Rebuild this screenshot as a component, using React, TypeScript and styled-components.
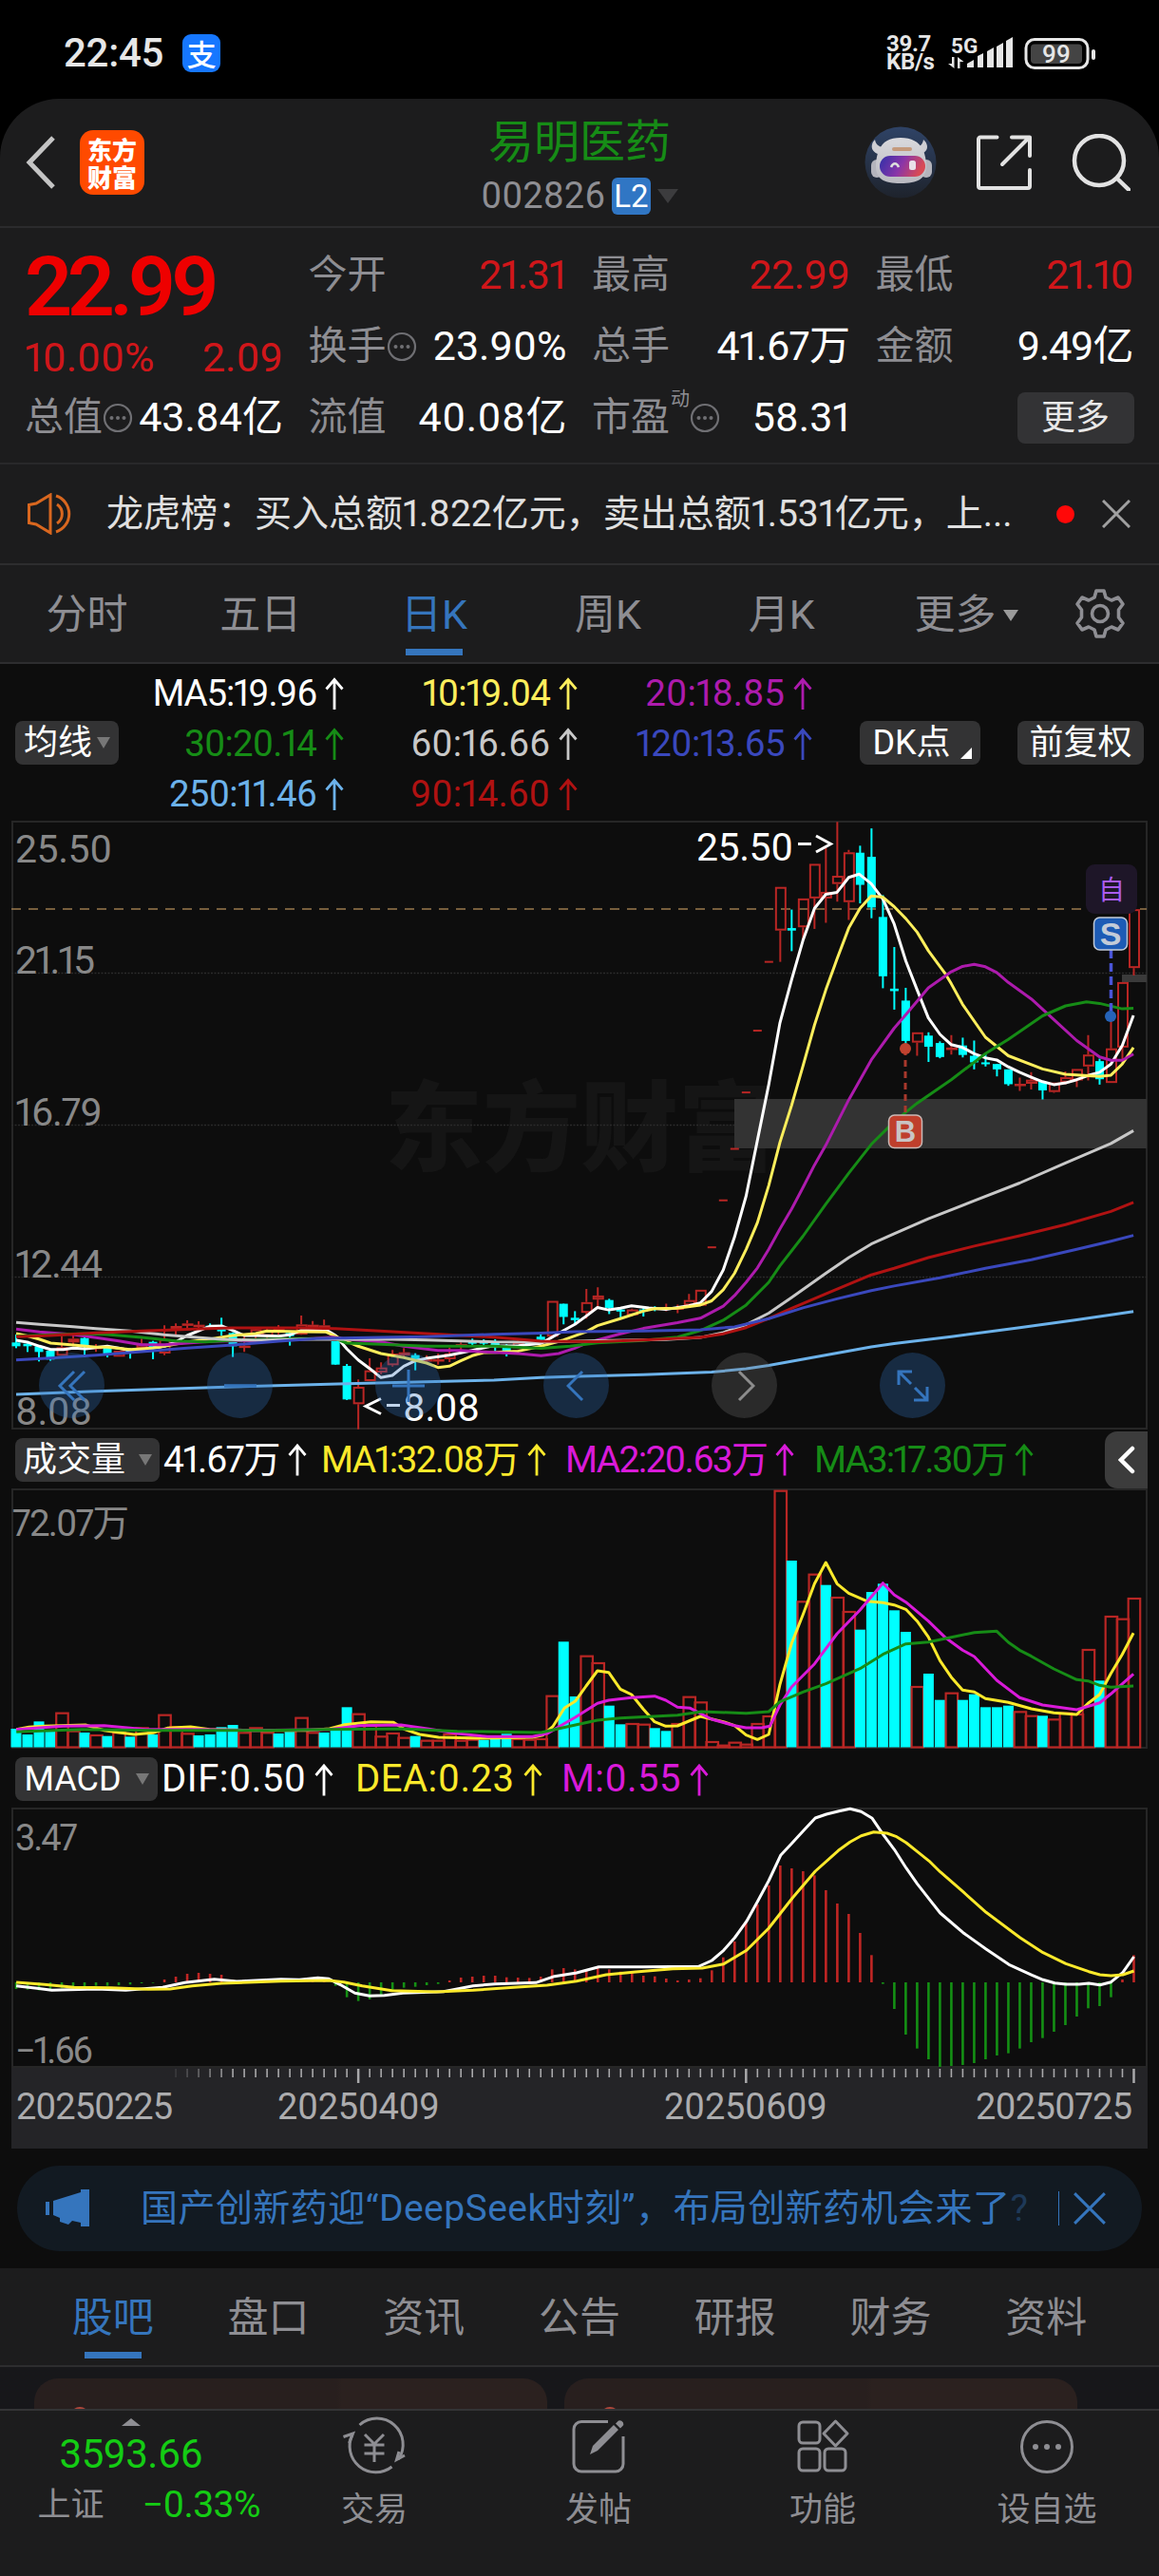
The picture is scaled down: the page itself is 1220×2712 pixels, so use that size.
import React from "react";
import styled, { createGlobalStyle, css } from "styled-components";

const BLUE = "#3575bd";
const GREY = "#8e8e93";
const RED = "#d0161a";
const UP = "#b92624";
const DOWN = "#00ffff";
const FONT = `Roboto, "Noto Sans CJK SC", sans-serif`;

const GlobalStyle = createGlobalStyle`
  html, body { margin: 0; padding: 0; background: #000; }
  body { font-family: ${FONT}; font-variant-numeric: proportional-nums; -webkit-font-smoothing: antialiased; }
  * { box-sizing: border-box; }
`;

const Screen = styled.div`
  width: 1220px;
  height: 2712px;
  overflow: hidden;
  display: flex;
  flex-direction: column;
  background: #000;
  white-space: nowrap;
`;

/* ---------- text ---------- */
const T = styled.span<{ $s: number; $c?: string; $w?: number; $ls?: number }>`
  font-size: ${(p) => p.$s}px;
  line-height: 1.2;
  color: ${(p) => p.$c ?? "#fff"};
  font-weight: ${(p) => p.$w ?? 400};
  letter-spacing: ${(p) => p.$ls ?? 0}px;
  margin-right: ${(p) => -(p.$ls ?? 0)}px;
`;

/* ---------- status bar ---------- */
const StatusBar = styled.div`
  height: 104px;
  flex: none;
  display: flex;
  align-items: center;
  padding: 8px 64px 0 67px;
  color: #e6e6e6;
`;
const PayBadge = styled.div`
  width: 40px;
  height: 40px;
  margin-left: 20px;
  border-radius: 9px;
  background: #1677ff;
  display: flex;
  align-items: center;
  justify-content: center;
  font: 500 31px/40px "Noto Sans CJK SC", sans-serif;
  color: #fff;
`;
const Speed = styled.div`
  margin-left: auto;
  display: flex;
  flex-direction: column;
  width: 55px;
  font: 700 24px/19px ${FONT};
  letter-spacing: -0.3px;
`;
const Signal = styled.svg`
  width: 72px;
  height: 40px;
  margin-left: 9px;
  overflow: visible;
`;
const BatteryIcon = styled.svg`
  width: 78px;
  height: 36px;
  margin-left: 9px;
`;

/* ---------- header ---------- */
const Panel = styled.div`
  flex: none;
  background: #1c1c1d;
`;
const Header = styled(Panel)`
  height: 136px;
  border-radius: 62px 62px 0 0;
  border-bottom: 2px solid #2b2b2d;
  display: grid;
  grid-template-columns: 420px 1fr 420px;
`;
const HeaderSide = styled.div<{ $end?: boolean }>`
  display: flex;
  align-items: center;
  ${(p) =>
    p.$end
      ? css`
          justify-content: flex-end;
          padding-right: 30px;
          gap: 42px;
        `
      : css`
          padding-left: 26px;
          gap: 24px;
        `}
`;
const AppLogo = styled.div`
  width: 68px;
  height: 68px;
  border-radius: 14px;
  background: #ff4a00;
  color: #fff;
  text-align: center;
  padding-top: 5px;
  font: 900 26px/29px "Noto Sans CJK SC", sans-serif;
`;
const HeaderTitle = styled.div`
  display: flex;
  flex-direction: column;
  align-items: center;
  padding-top: 17px;
`;
const CodeRow = styled.div`
  display: flex;
  align-items: center;
  height: 40px;
  margin-top: 8px;
  gap: 7px;
`;
const LevelTag = styled.span`
  width: 41px;
  height: 39px;
  border-radius: 6px;
  background: #3076c4;
  color: #fff;
  text-align: center;
  font: 400 33px/40px ${FONT};
`;
const Tri = styled.i<{ $w: number; $h: number; $c: string; $up?: boolean; $hang?: boolean }>`
  width: 0;
  height: 0;
  flex: none;
  margin-right: ${(p) => (p.$hang ? -p.$w - 7 : 0)}px;
  border-left: ${(p) => p.$w / 2}px solid transparent;
  border-right: ${(p) => p.$w / 2}px solid transparent;
  ${(p) => (p.$up ? "border-bottom" : "border-top")}: ${(p) => p.$h}px solid ${(p) => p.$c};
`;

/* ---------- quote ---------- */
const Quote = styled(Panel)`
  height: 249px;
  border-bottom: 2px solid #28282a;
  padding: 12px 24px 12px 26px;
  display: grid;
  grid-template-columns: 272px 272px 272px 272px;
  column-gap: 26.5px;
`;
const QuoteCol = styled.div`
  display: grid;
  grid-template-rows: 75px 75px 75px;
`;
const PriceCol = styled.div`
  display: grid;
  grid-template-rows: 99px 52px 74px;
`;
const Pair = styled.div`
  display: flex;
  align-items: center;
  justify-content: space-between;
`;
const Label = styled.div`
  display: flex;
  align-items: center;
  color: ${GREY};
  font-size: 41px;
  line-height: 1.2;
`;
const Sup = styled.sup`
  font-size: 20px;
  line-height: 1;
  align-self: flex-start;
  margin: -5px 0 0 1px;
`;
const MoreButton = styled.button`
  width: 123px;
  height: 54px;
  margin-left: auto;
  align-self: center;
  border: 0;
  border-radius: 8px;
  background: #333335;
  color: #e8e8e8;
  font: 400 36px/52px ${FONT};
  padding: 0;
`;

/* ---------- notice ---------- */
const Notice = styled(Panel)`
  height: 106px;
  border-bottom: 2px solid #2d2d2f;
  display: flex;
  align-items: center;
  padding: 0 30px 0 28px;
`;
const NoticeText = styled.div`
  margin-left: 30px;
  font-size: 39px;
  line-height: 1.2;
  color: #e0e0e0;
`;
const RedDot = styled.i`
  width: 19px;
  height: 19px;
  border-radius: 50%;
  background: #ff0808;
  margin: 0 29px 0 auto;
`;

/* ---------- tab bars ---------- */
const Tabs = styled(Panel)<{ $pad?: number }>`
  height: 104px;
  border-bottom: 2px solid #2d2d2f;
  display: flex;
  padding: 0 ${(p) => p.$pad ?? 0}px;
`;
const Tab = styled.div<{ $on?: boolean }>`
  flex: 1;
  display: flex;
  align-items: center;
  justify-content: center;
  gap: 7px;
  padding-top: 3px;
  font-size: 43px;
  line-height: 1.2;
  color: ${(p) => (p.$on ? BLUE : GREY)};
  ${(p) =>
    p.$on &&
    css`
      background: linear-gradient(${BLUE}, ${BLUE}) center bottom 7px / 60px 7px no-repeat;
    `}
`;
const GearCell = styled.div`
  width: 123px;
  display: flex;
  align-items: center;
  justify-content: center;
`;

/* ---------- chart area ---------- */
const Charts = styled.div`
  flex: none;
  background: #0d0d0d;
  padding: 0 12px;
  height: 1689px;
`;
const AverageBar = styled.div`
  height: 165px;
  display: flex;
  align-items: center;
  padding: 0 4px;
`;
const AverageGrid = styled.div`
  width: 730px;
  display: grid;
  grid-template-columns: 237px 246px 247px;
  grid-auto-rows: 53.3px;
  margin-top: 3px;
`;
const Reading = styled.div<{ $c: string; $s?: number; $ls?: number }>`
  display: flex;
  align-items: center;
  justify-content: flex-end;
  gap: 9px;
  color: ${(p) => p.$c};
  font-size: ${(p) => p.$s ?? 38.5}px;
  letter-spacing: ${(p) => p.$ls ?? 0}px;
  line-height: 1.2;
`;
const Chip = styled.button<{ $w: number; $gap?: number }>`
  width: ${(p) => p.$w}px;
  height: 46px;
  flex: none;
  border: 0;
  padding: 0;
  border-radius: 8px;
  background: #333334;
  color: #fff;
  font: 400 36px/44px ${FONT};
  display: flex;
  align-items: center;
  justify-content: center;
  gap: ${(p) => p.$gap ?? 4}px;
`;
const ChipGap = styled.div<{ $w: number }>`
  width: ${(p) => p.$w}px;
`;
const Corner = styled.i`
  width: 0;
  height: 0;
  align-self: flex-end;
  margin: 0 -4px 6px 6px;
  border-left: 12px solid transparent;
  border-bottom: 12px solid #fff;
`;
const IndicatorBar = styled.div<{ $h: number }>`
  height: ${(p) => p.$h}px;
  display: flex;
  align-items: center;
  padding: 2px 0 0 4px;
`;
const Slot = styled.div<{ $w: number }>`
  width: ${(p) => p.$w}px;
  display: flex;
  padding-left: 4px;
`;
const Collapse = styled.div`
  width: 45px;
  height: 60px;
  margin-left: auto;
  border-radius: 13px 0 0 13px;
  background: #3c3c3c;
  display: flex;
  align-items: center;
  justify-content: center;
`;
const ChartBox = styled.div`
  position: relative;
`;
const Plot = styled.svg`
  display: block;
  width: 1196px;
  overflow: visible;
`;
const Controls = styled.div`
  position: absolute;
  left: 29px;
  top: 560px;
  display: flex;
  gap: 108px;
`;
const Round = styled.div<{ $grey?: boolean }>`
  width: 69px;
  height: 69px;
  border-radius: 50%;
  background: ${(p) => (p.$grey ? "rgba(120,120,120,0.28)" : "rgba(48,114,190,0.3)")};
  display: flex;
  align-items: center;
  justify-content: center;
`;
const BannerWrap = styled.div`
  padding: 18px 6px 0;
`;
const Banner = styled.div`
  height: 90px;
  border-radius: 45px;
  background: #121a22;
  display: flex;
  align-items: center;
  padding: 0 36px 0 29px;
  color: ${BLUE};
`;
const BannerText = styled.div`
  width: 966px;
  margin-left: 53px;
  font-size: 39px;
  letter-spacing: 0.45px;
  line-height: 1.2;
`;
const Faded = styled.span`
  opacity: 0.35;
`;
const BannerRule = styled.i`
  width: 1px;
  height: 36px;
  background: ${BLUE};
  margin-right: 15px;
`;

/* ---------- lower part ---------- */
const Cards = styled.div`
  flex: none;
  height: 44px;
  background: #17171a;
  padding: 12px 0 0 36px;
  display: flex;
  gap: 18px;
  overflow: hidden;
`;
const Card = styled.div`
  width: 540px;
  height: 90px;
  border-radius: 25px;
  background: linear-gradient(90deg, #281f1e 59%, #2b211f 60%);
  padding: 30px 0 0 38px;
`;
const CardDot = styled.i`
  display: block;
  width: 20px;
  height: 20px;
  border-radius: 50%;
  background: #b0483c;
`;
const BottomBar = styled.div`
  flex: 1;
  border-top: 2px solid #343436;
  background: #1c1c1d;
  display: grid;
  grid-template-columns: 276px repeat(4, 236px);
`;
const IndexCell = styled.div`
  display: flex;
  flex-direction: column;
  align-items: center;
  padding-top: 8px;
  gap: 5px;
`;
const IndexRow = styled.div`
  width: 235px;
  margin-left: 38px;
  display: flex;
  align-items: center;
  justify-content: space-between;
`;
const NavItem = styled.div`
  display: flex;
  flex-direction: column;
  align-items: center;
  padding-top: 5px;
  gap: 13px;
  font-size: 35px;
  line-height: 1.2;
  color: ${GREY};
`;

/* ---------- small glyphs ---------- */
const Arrow = ({ h = 34 }: { h?: number }) => (
  <svg width="20" height={h} viewBox="0 0 20 34" fill="none" stroke="currentColor" strokeWidth="2.8">
    <path d="M10 34V3M1.5 12.5 10 2.500l8.500 10" />
  </svg>
);
const Dots = () => (
  <svg width="32" height="32" viewBox="0 0 32 32" fill="none" stroke="#6f6f73" strokeWidth="2.2">
    <circle cx="16" cy="16" r="14" />
    <g fill="#6f6f73" stroke="none">
      <circle cx="9.500" cy="16" r="2" />
      <circle cx="16" cy="16" r="2" />
      <circle cx="22.500" cy="16" r="2" />
    </g>
  </svg>
);
const Cross = ({ s, c, w = 3 }: { s: number; c: string; w?: number }) => (
  <svg width={s} height={s} viewBox="0 0 30 30" stroke={c} strokeWidth={w}>
    <path d="M1 1l28 28M29 1 1 29" />
  </svg>
);
const Robot = () => (
  <svg width="76" height="76" viewBox="0 0 76 76">
    <defs>
      <linearGradient id="sky" x1="0" y1="0" x2="0" y2="1">
        <stop offset="0" stopColor="#2f4366" />
        <stop offset="1" stopColor="#1e232c" />
      </linearGradient>
      <linearGradient id="visor" x1="0" y1="0" x2="1" y2="0.25">
        <stop offset="0" stopColor="#2f2fa8" />
        <stop offset="0.55" stopColor="#8a35a8" />
        <stop offset="1" stopColor="#d84a55" />
      </linearGradient>
      <linearGradient id="shell" x1="0" y1="0" x2="0" y2="1">
        <stop offset="0" stopColor="#d9d9dd" />
        <stop offset="1" stopColor="#b9b9c0" />
      </linearGradient>
    </defs>
    <circle cx="38" cy="38" r="37.500" fill="url(#sky)" />
    <path d="M11 14c-6 6-4 15 8 16l7-8c-8 1-14-1-15-8zM62 14c7 6 5 15-7 16l-7-8c8 1 13-1 14-8z" fill="#cfcfd4" />
    <rect x="7" y="35" width="12" height="19" rx="6" fill="#b4b4bc" />
    <rect x="59" y="35" width="12" height="19" rx="6" fill="#b4b4bc" />
    <path d="M24 15c6-4 22-4 28 0 9 4 13 15 13 27 0 13-9 18-27 18s-26-5-26-18c0-12 4-23 12-27z" fill="url(#shell)" />
    <rect x="16" y="31" width="48" height="22" rx="11" fill="url(#visor)" />
    <rect x="29" y="22" width="21" height="4" rx="2" fill="#c59a7c" />
    <path d="M28 43c2-5 6-5 8 0" stroke="#ddd" strokeWidth="2.500" fill="none" />
    <rect x="47" y="36" width="7" height="10" rx="2.500" fill="#e9dfe8" />
  </svg>
);

/* ---------- chart data ---------- */
type Pt = [number, number];
const xAt = (i: number) => 17 + 12.005 * i;
const ya = (y: number) => 1330 + y / 3;
const yb = (y: number) => 860 + y / 2.306;
const xb = (x: number) => 600 + x / 2.529;
const yv = (y: number) => 1380 + y / 3;
const ym = (y: number) => 1840 + y / 3;

// direction, body top, body bottom, wick top, wick bottom
type Bar = [number, number, number, number, number];
const early: Bar[] = [
  [0, 250, 262, 225, 268], [0, 254, 262, 252, 280], [0, 262, 280, 258, 310], [0, 276, 304, 272, 308],
  [1, 265, 292, 230, 292], [1, 238, 250, 228, 262], [0, 236, 258, 232, 290], [1, 264, 267, 255, 280],
  [0, 266, 290, 262, 297], [1, 276, 295, 276, 295], [0, 272, 280, 268, 301], [1, 254, 268, 238, 275],
  [0, 248, 268, 245, 303], [1, 240, 285, 196, 290], [1, 198, 208, 190, 225], [1, 190, 192, 180, 204],
  [1, 194, 197, 183, 204], [0, 197, 200, 190, 210], [0, 207, 215, 172, 228], [0, 220, 262, 218, 296],
  [1, 260, 264, 230, 280], [1, 208, 225, 205, 245], [1, 212, 230, 205, 238], [1, 206, 212, 195, 225],
  [0, 220, 230, 215, 260], [1, 193, 225, 165, 226], [1, 194, 197, 182, 206], [1, 196, 206, 178, 215],
  [0, 246, 320, 246, 320], [0, 324, 430, 318, 432], [1, 390, 445, 367, 524], [1, 338, 372, 300, 372],
  [1, 329, 345, 313, 350], [1, 285, 322, 274, 326], [1, 281, 291, 268, 298], [0, 290, 306, 284, 338],
  [1, 303, 306, 290, 315], [1, 303, 306, 285, 320], [1, 285, 303, 266, 312], [1, 255, 264, 250, 275],
  [0, 248, 252, 238, 262], [0, 248, 252, 240, 262],
];
const late: Bar[] = [
  [0, 1275, 1282, 1268, 1300], [0, 1286, 1296, 1280, 1310], [1, 1275, 1290, 1272, 1292], [0, 1272, 1280, 1270, 1284],
  [0, 1262, 1270, 1250, 1280], [1, 1175, 1262, 1175, 1262], [0, 1182, 1214, 1182, 1232], [0, 1216, 1222, 1200, 1232],
  [1, 1178, 1204, 1146, 1218], [1, 1162, 1172, 1142, 1190], [0, 1173, 1192, 1170, 1207], [0, 1196, 1201, 1190, 1215],
  [1, 1196, 1210, 1194, 1212], [0, 1196, 1200, 1190, 1213], [0, 1192, 1196, 1188, 1200], [1, 1191, 1194, 1182, 1200],
  [1, 1191, 1195, 1184, 1205], [1, 1173, 1186, 1158, 1190], [1, 1148, 1187, 1148, 1187], [2, 1045, 0, 0, 0],
  [2, 931, 0, 0, 0], [2, 806, 0, 0, 0], [2, 669, 0, 0, 0], [2, 519, 0, 0, 0], [2, 352, 0, 0, 0],
  [1, 170, 276, 170, 352], [0, 270, 276, 225, 326], [1, 198, 268, 198, 300], [1, 114, 198, 114, 272],
  [1, 182, 198, 75, 257], [1, 143, 163, 12, 206], [1, 86, 207, 80, 250], [0, 87, 165, 70, 210],
  [0, 97, 220, 28, 246], [0, 243, 387, 190, 416], [0, 417, 423, 316, 468], [0, 446, 544, 415, 560],
  [1, 523, 548, 523, 580], [0, 531, 558, 523, 595], [0, 549, 583, 545, 586], [1, 560, 566, 530, 577],
  [0, 555, 578, 536, 584], [0, 580, 596, 543, 613], [0, 596, 600, 575, 606], [0, 600, 613, 600, 630],
  [0, 613, 649, 613, 653], [1, 648, 651, 633, 665], [1, 638, 648, 620, 662], [0, 643, 664, 643, 686],
  [1, 645, 668, 645, 670], [1, 632, 645, 618, 650], [1, 612, 640, 612, 656], [1, 577, 606, 530, 640],
  [0, 593, 637, 587, 650], [1, 562, 646, 485, 646], [1, 401, 560, 401, 590], [1, 224, 367, 224, 385],
];
const candles: Bar[] = [
  ...early.map(([d, a, b, c, e]): Bar => [d, ya(a), ya(b), ya(c), ya(e)]),
  ...late.map(([d, a, b, c, e]): Bar => [d, yb(a), yb(b), yb(c), yb(e)]),
];

const averages: { c: string; a: Pt[]; b: Pt[] }[] = [
  {
    c: "#6cb2ea",
    a: [[51, 414], [300, 404], [735, 390], [1095, 380], [1560, 369]],
    b: [[-77, 1361], [0, 1359], [195, 1354], [377, 1348], [469, 1340], [529, 1332], [620, 1317], [711, 1302], [802, 1287], [863, 1279], [1015, 1262], [1197, 1240], [1349, 1221], [1440, 1209], [1500, 1201]],
  },
  {
    c: "#ffffff",
    a: [[51, 243], [90, 250], [125, 262], [160, 272], [200, 272], [231, 268], [270, 270], [339, 262], [375, 268], [411, 275], [447, 273], [483, 268], [519, 262], [555, 248], [591, 228], [640, 208], [663, 199], [700, 198], [735, 212], [771, 228], [807, 228], [880, 230], [915, 226], [951, 212], [1030, 210], [1060, 228], [1095, 270], [1131, 305], [1167, 332], [1203, 361], [1239, 354], [1275, 325], [1311, 308], [1347, 300], [1419, 290], [1491, 275], [1550, 262]],
    b: [[-137, 1284], [-77, 1278], [-57, 1268], [-17, 1247], [13, 1232], [43, 1212], [73, 1191], [103, 1197], [134, 1193], [164, 1187], [210, 1192], [255, 1196], [316, 1187], [347, 1180], [377, 1152], [408, 1100], [438, 1020], [469, 920], [499, 785], [529, 650], [559, 500], [590, 395], [620, 300], [651, 222], [681, 188], [711, 183], [742, 147], [770, 139], [802, 162], [833, 200], [863, 260], [894, 350], [924, 420], [954, 488], [985, 528], [1015, 553], [1045, 560], [1076, 575], [1106, 585], [1136, 590], [1167, 607], [1197, 620], [1228, 632], [1258, 643], [1288, 650], [1319, 646], [1349, 638], [1379, 628], [1410, 620], [1440, 600], [1470, 555], [1500, 482]],
  },
  {
    c: "#fdee5c",
    a: [[51, 222], [90, 230], [125, 240], [160, 252], [231, 258], [303, 265], [339, 265], [411, 272], [483, 268], [519, 262], [591, 248], [660, 240], [735, 228], [807, 222], [843, 214], [951, 216], [1030, 217], [1070, 235], [1131, 262], [1203, 285], [1275, 298], [1347, 315], [1383, 329], [1419, 325], [1455, 308], [1491, 292], [1527, 282]],
    b: [[-200, 1300], [-137, 1297], [-77, 1285], [-17, 1270], [43, 1250], [73, 1235], [134, 1218], [195, 1200], [225, 1194], [286, 1193], [347, 1185], [377, 1175], [408, 1148], [438, 1108], [469, 1050], [499, 985], [529, 895], [559, 790], [590, 700], [620, 605], [651, 505], [681, 420], [711, 345], [742, 270], [772, 222], [802, 192], [833, 195], [863, 218], [894, 247], [924, 280], [954, 325], [1000, 382], [1015, 405], [1045, 455], [1106, 535], [1167, 580], [1258, 612], [1319, 625], [1410, 630], [1440, 627], [1470, 600], [1500, 560]],
  },
  {
    c: "#ad1bad",
    a: [[51, 208], [125, 217], [231, 225], [303, 235], [375, 245], [447, 257], [519, 257], [591, 252], [663, 247], [735, 245], [843, 243], [951, 240], [1050, 233], [1095, 240], [1203, 248], [1275, 262], [1383, 275], [1455, 275], [1527, 280]],
    b: [[-137, 1303], [-77, 1308], [-30, 1303], [13, 1290], [43, 1278], [73, 1270], [134, 1255], [195, 1242], [286, 1228], [347, 1217], [408, 1188], [438, 1162], [469, 1130], [499, 1095], [529, 1050], [559, 1000], [590, 952], [620, 900], [651, 845], [681, 797], [742, 687], [802, 590], [863, 513], [894, 480], [954, 415], [1015, 376], [1045, 363], [1076, 358], [1106, 364], [1136, 378], [1167, 402], [1228, 442], [1288, 492], [1349, 543], [1410, 583], [1440, 591], [1470, 591], [1500, 576]],
  },
  {
    c: "#168c16",
    a: [[51, 230], [160, 226], [267, 222], [339, 225], [447, 234], [555, 245], [650, 248], [735, 243], [843, 240], [951, 238], [1060, 238], [1095, 252], [1203, 256], [1347, 262], [1560, 262]],
    b: [[-77, 1290], [0, 1285], [73, 1277], [195, 1271], [286, 1263], [347, 1247], [408, 1222], [469, 1185], [529, 1130], [559, 1090], [620, 1018], [681, 940], [742, 865], [802, 795], [863, 740], [924, 695], [1015, 638], [1106, 575], [1167, 540], [1258, 483], [1319, 459], [1375, 449], [1410, 453], [1470, 466], [1500, 465]],
  },
  {
    c: "#c8c8c8",
    a: [[51, 187], [125, 193], [231, 200], [303, 206], [411, 214], [519, 226], [591, 232], [700, 240], [807, 243], [951, 240], [1095, 240], [1239, 240], [1347, 242], [1560, 248]],
    b: [[-77, 1275], [73, 1272], [255, 1269], [347, 1264], [408, 1252], [469, 1233], [529, 1205], [590, 1167], [681, 1108], [742, 1070], [802, 1037], [863, 1012], [954, 976], [1076, 932], [1197, 889], [1319, 840], [1440, 793], [1500, 762]],
  },
  {
    c: "#b01212",
    a: [[51, 232], [160, 228], [303, 220], [447, 214], [555, 210], [627, 207], [735, 204], [951, 204], [1060, 206], [1200, 214], [1347, 222], [1560, 233]],
    b: [[-77, 1273], [73, 1274], [195, 1270], [347, 1264], [408, 1255], [469, 1240], [529, 1218], [590, 1193], [681, 1158], [802, 1112], [863, 1096], [954, 1070], [1076, 1042], [1197, 1017], [1319, 990], [1440, 958], [1500, 936]],
  },
  {
    c: "#3a48bd",
    a: [[51, 305], [160, 299], [303, 290], [447, 279], [591, 268], [735, 258], [880, 246], [1000, 238], [1203, 234], [1347, 232], [1560, 224]],
    b: [[-77, 1253], [13, 1250], [195, 1248], [347, 1245], [438, 1238], [529, 1218], [620, 1192], [711, 1170], [802, 1150], [863, 1139], [985, 1119], [1106, 1096], [1228, 1075], [1349, 1050], [1440, 1030], [1500, 1016]],
  },
];

// a leading "c" marks a falling session
const volumes = `c1320 c1338 c1297 c1328 r1268 r1325 c1332 r1338 c1343 r1330 c1345 r1315 c1338 r1274 r1312 r1333 c1341 c1338 c1315 c1308 r1330 r1315 r1330 c1335 c1330 r1283 r1330 c1332 c1322 c1252 r1271 r1305 r1342 r1332 r1346 c1343 r1355 r1355 r1335 r1355 r1352 c1355 c1343 c1336 r1350 r1352 r1350 r1214 c1045 c1218 r1088 r1110 c1247 c1306 r1302 r1304 c1318 c1327 r1302 r1217 r1234 r1359 r1370 r1361 r1367 r1302 r1278 r566 c789 r916 r830 c866 r903 r948 c1007 c888 c862 c946 c1014 r1185 c1146 c1229 r1205 c1229 c1211 c1252 c1252 c1247 r1264 r1277 c1279 r1288 r1268 r1272 r1068 c1168 r963 r971 r906`
  .split(" ")
  .map((s) => ({ fall: s[0] === "c", y: yv(Number(s.slice(1))) }));

const volumeLines: { c: string; p: Pt[] }[] = [
  {
    c: "#fbe92b",
    p: [[-1474, 1322], [-1440, 1315], [-1400, 1312], [-1290, 1308], [-1240, 1325], [-1200, 1332], [-1160, 1338], [-1110, 1333], [-1070, 1318], [-1010, 1314], [-960, 1322], [-840, 1325], [-700, 1325], [-640, 1320], [-600, 1307], [-530, 1298], [-470, 1300], [-440, 1322], [-400, 1338], [-350, 1347], [-240, 1350], [-100, 1347], [-72, 1340], [-45, 1312], [-15, 1255], [15, 1232], [43, 1185], [73, 1137], [103, 1142], [134, 1195], [164, 1212], [195, 1258], [225, 1298], [255, 1312], [286, 1311], [316, 1296], [347, 1281], [408, 1298], [438, 1310], [469, 1340], [499, 1354], [529, 1338], [544, 1260], [559, 1180], [590, 1050], [620, 960], [651, 862], [681, 795], [711, 862], [742, 892], [790, 917], [833, 922], [863, 929], [894, 943], [924, 980], [954, 1030], [985, 1105], [1015, 1157], [1045, 1198], [1076, 1204], [1106, 1225], [1167, 1237], [1228, 1257], [1288, 1270], [1349, 1275], [1379, 1240], [1410, 1212], [1440, 1145], [1470, 1085], [1500, 1018]],
  },
  {
    c: "#d91ad9",
    p: [[-1474, 1322], [-1350, 1312], [-1240, 1310], [-1130, 1322], [-1000, 1322], [-840, 1325], [-640, 1322], [-560, 1310], [-450, 1308], [-380, 1320], [-300, 1335], [-220, 1345], [-100, 1345], [-60, 1335], [-17, 1305], [13, 1285], [43, 1262], [73, 1240], [103, 1230], [164, 1222], [225, 1217], [255, 1230], [286, 1252], [320, 1255], [377, 1290], [438, 1310], [469, 1317], [510, 1317], [532, 1312], [559, 1245], [590, 1188], [651, 1115], [711, 1020], [772, 945], [833, 860], [863, 897], [894, 920], [954, 980], [1000, 1033], [1045, 1072], [1076, 1092], [1136, 1167], [1197, 1222], [1258, 1245], [1349, 1260], [1410, 1238], [1440, 1210], [1500, 1147]],
  },
  {
    c: "#168c16",
    p: [[-1474, 1330], [-1300, 1322], [-1100, 1325], [-800, 1325], [-650, 1322], [-450, 1320], [-300, 1328], [-77, 1332], [0, 1312], [73, 1293], [134, 1286], [286, 1277], [350, 1266], [469, 1271], [529, 1266], [559, 1235], [620, 1204], [681, 1178], [772, 1130], [833, 1085], [894, 1052], [954, 1046], [1015, 1031], [1076, 1016], [1136, 1012], [1167, 1047], [1197, 1072], [1228, 1091], [1288, 1131], [1349, 1165], [1379, 1169], [1410, 1183], [1440, 1189], [1500, 1185]],
  },
];

const ZERO = 741;
const histogram = [
  762, 764, 766, 765, 760, 758, 756, 752, 752, 750, 748, 744, 743, 732, 723, 714, 711, 714, 717, 733, 736, 736, 732, 733, 735,
  736, 733, 733, 752, 788, 800, 795, 785, 768, 758, 755, 750, 746, 735, 726, 723, 720, 720, 725, 726, 727, 723, 700, 696, 700,
  700, 690, 700, 707, 712, 720, 722, 729, 735, 732, 728, 703, 662, 612, 552, 495, 435, 372, 381, 390, 403, 450, 492, 525, 585,
  655, 746, 825, 906, 950, 984, 1008, 1005, 1002, 996, 984, 972, 965, 950, 930, 917, 897, 876, 849, 823, 816, 788, 732, 655,
];
const dif: Pt[] = [[22, 752], [50, 760], [70, 766], [130, 762], [170, 766], [220, 757], [250, 742], [290, 731], [320, 738], [380, 731], [405, 733], [430, 727], [445, 730], [460, 748], [480, 775], [500, 784], [520, 782], [545, 775], [600, 770], [640, 752], [670, 746], [725, 742], [750, 722], [780, 711], [810, 692], [870, 692], [945, 691], [963, 672], [979, 640], [994, 600], [1010, 548], [1025, 485], [1040, 420], [1056, 340], [1072, 300], [1087, 262], [1103, 222], [1118, 210], [1135, 200], [1150, 193], [1165, 202], [1180, 223], [1195, 275], [1210, 322], [1226, 380], [1241, 430], [1257, 478], [1272, 522], [1303, 584], [1334, 636], [1365, 685], [1396, 718], [1411, 733], [1427, 743], [1442, 747], [1460, 747], [1473, 744], [1488, 749], [1503, 740], [1519, 710], [1534, 660]];
const dea: Pt[] = [[22, 741], [60, 748], [100, 757], [150, 758], [200, 763], [230, 762], [260, 752], [300, 744], [380, 737], [445, 735], [465, 740], [490, 752], [530, 767], [590, 771], [640, 766], [700, 756], [740, 750], [780, 737], [820, 717], [860, 708], [910, 698], [950, 696], [979, 683], [1010, 640], [1040, 570], [1072, 475], [1103, 390], [1134, 325], [1150, 298], [1165, 278], [1182, 266], [1200, 270], [1212, 280], [1226, 300], [1241, 328], [1257, 358], [1272, 392], [1303, 455], [1334, 520], [1380, 600], [1411, 647], [1442, 682], [1473, 707], [1488, 717], [1503, 720], [1519, 717], [1534, 705]];

const join = (pts: Pt[]) => pts.map(([x, y]) => `${x.toFixed(1)},${y.toFixed(1)}`).join(" ");
const Line = ({ pts, c, w = 3 }: { pts: Pt[]; c: string; w?: number }) => (
  <polyline points={join(pts)} fill="none" stroke={c} strokeWidth={w} strokeLinejoin="round" />
);
const Txt = ({ x, y, s = 41, c = "#888", a, len, children }: { x: number; y: number; s?: number; c?: string; a?: "middle" | "end"; len?: number; children: string }) => (
  <text x={x} y={y} fontSize={s} fill={c} textAnchor={a} textLength={len} fontFamily={FONT}>
    {children}
  </text>
);

const PriceChart = () => (
  <Plot viewBox="12 864 1196 641" height="641">
    <rect x="13" y="865" width="1194" height="639" fill="none" stroke="#262626" strokeWidth="2" />
    <text x="405" y="1225" fontSize="103" fontWeight="900" fill="#151515" fontFamily='"Noto Sans CJK SC", sans-serif'>
      东方财富
    </text>
    <path d="M12 1024.500H1207M12 1184.500H1207M12 1344.500H1207" stroke="#2b2b2b" strokeWidth="1.500" strokeDasharray="2 1.500" />
    <rect x="773" y="1157" width="434" height="52" fill="#333" />
    <rect x="1181" y="1026" width="26" height="8" fill="#3a3a3a" />
    <path d="M12 957H1207" stroke="#9b7a4d" strokeWidth="1.500" strokeDasharray="10 8" />
    <Txt x={16} y={908} len={102}>25.50</Txt>
    <Txt x={16} y={1025} len={84}>21.15</Txt>
    <Txt x={16} y={1184.500} len={92}>16.79</Txt>
    <Txt x={16} y={1345} len={92}>12.44</Txt>
    {candles.map(([d, t, b, h, l], i) => {
      const x = xAt(i);
      if (d === 2) return <rect key={i} x={x - 4.500} y={t - 1} width="9" height="2" fill={UP} />;
      if (d === 0)
        return (
          <g key={i} fill={DOWN}>
            <rect x={x - 1} y={h} width="2" height={l - h} />
            <rect x={x - 4.500} y={t} width="9" height={Math.max(2, b - t)} />
          </g>
        );
      return (
        <g key={i} stroke={UP} strokeWidth="2" fill="none">
          <path d={`M${x} ${h}V${t}M${x} ${b}V${l}`} />
          <rect x={x - 4.500} y={t + 1} width="10" height={Math.max(0.5, b - t - 2)} />
        </g>
      );
    })}
    {averages.map((m) => (
      <Line key={m.c} c={m.c} pts={[...m.a.map(([x, y]): Pt => [x / 3, ya(y)]), ...m.b.map(([x, y]): Pt => [xb(x), yb(y)])]} />
    ))}
    <Txt x={16} y={1500} len={81}>8.08</Txt>
    <Txt x={733} y={906} s={41} c="#fff" len={102}>25.50</Txt>
    <path d="M840 888.500h14M859 880l15.500 8.500-15.500 8.500" stroke="#fff" strokeWidth="3" fill="none" />
    <Txt x={424} y={1496} s={41} c="#fff" len={81}>8.08</Txt>
    <path d="M401 1472.500l-16 8 16 8M407 1479.500h14" stroke="#fff" strokeWidth="3" fill="none" />
    <path d="M953 1104v70" stroke="#a8382c" strokeWidth="3" strokeDasharray="7 5" />
    <circle cx="953" cy="1104" r="6" fill="#c0422f" />
    <rect x="935.500" y="1174" width="35" height="34.500" rx="6" fill="#bf3f2c" stroke="#c9b9b6" strokeWidth="1.500" />
    <text x="953" y="1202" fontSize="31" fontWeight="700" fill="#c9c4c4" textAnchor="middle" fontFamily='"Liberation Sans", sans-serif'>
      B
    </text>
    <path d="M1169.500 1000v66" stroke="#4a55d8" strokeWidth="3.500" strokeDasharray="9 5" />
    <circle cx="1169" cy="1070" r="6" fill="#2563b8" />
    <rect x="1143" y="910" width="54" height="52" rx="9" fill="#1e1628" />
    <text x="1170" y="947" fontSize="28" fill="#a95cf0" textAnchor="middle" fontFamily='"Noto Sans CJK SC", sans-serif'>
      自
    </text>
    <rect x="1151.500" y="966" width="35" height="34" rx="6" fill="#1d5bb5" stroke="#c3cbd8" strokeWidth="1.500" />
    <text x="1169" y="994.500" fontSize="34" fontWeight="700" fill="#c3cbd8" textAnchor="middle" fontFamily='"Liberation Sans", sans-serif'>
      S
    </text>
  </Plot>
);

const VolumeChart = () => (
  <Plot viewBox="12 1567 1196 274" height="274">
    <rect x="13" y="1568" width="1194" height="272" fill="none" stroke="#262626" strokeWidth="2" />
    <Txt x={13} y={1617} s={38.500} len={123}>72.07万</Txt>
    {volumes.map(({ fall, y }, i) =>
      fall ? (
        <rect key={i} x={xAt(i) - 5.500} y={y} width="11" height={1839.500 - y} fill={DOWN} />
      ) : (
        <rect key={i} x={xAt(i) - 5.800} y={y + 1} width="12.500" height={1838.500 - y} fill="none" stroke={UP} strokeWidth="2.200" />
      ),
    )}
    {volumeLines.map((l) => (
      <Line key={l.c} c={l.c} pts={l.p.map(([x, y]): Pt => [xb(x), yv(y)])} />
    ))}
  </Plot>
);

const MacdChart = () => (
  <Plot viewBox="12 1903 1196 274" height="274">
    <rect x="13" y="1904" width="1194" height="272" fill="none" stroke="#262626" strokeWidth="2" />
    {histogram.map((v, i) => (
      <path key={i} d={`M${xAt(i)} ${ym(ZERO)}V${ym(v)}`} stroke={v < ZERO ? "#c02624" : "#149014"} strokeWidth="2.600" />
    ))}
    <Line c="#fff" pts={dif.map(([x, y]): Pt => [x / 1.2852, ym(y)])} />
    <Line c="#fbe92b" pts={dea.map(([x, y]): Pt => [x / 1.2852, ym(y)])} />
    <Txt x={16} y={1948} s={38} len={66}>3.47</Txt>
    <Txt x={16} y={2172} s={38} len={82}>−1.66</Txt>
  </Plot>
);

const DateAxis = () => (
  <Plot viewBox="12 2177 1196 85" height="85">
    <rect x="12" y="2177" width="1196" height="85" fill="#242427" />
    {histogram.map((_, i) =>
      i < 14 ? null : (
        <path
          key={i}
          d={`M${xAt(i)} 2178V${i % 34 === 30 ? 2193 : 2187}`}
          stroke="#a9a9ab"
          strokeWidth={i % 34 === 30 ? 2.5 : 1.6}
          opacity={Math.min(1, (i - 13) / 6)}
        />
      ),
    )}
    <Txt x={17} y={2231} s={38} c="#acacae" len={165}>20250225</Txt>
    <Txt x={292} y={2231} s={38} c="#acacae" len={171}>20250409</Txt>
    <Txt x={699} y={2231} s={38} c="#acacae" len={172}>20250609</Txt>
    <Txt x={1027} y={2231} s={38} c="#acacae" len={165}>20250725</Txt>
  </Plot>
);

const averageReadings: [string, string, number][] = [
  ["MA5:19.96", "#ffffff", -1.2], ["10:19.04", "#fdee5c", -0.9], ["20:18.85", "#ad1bad", 0],
  ["30:20.14", "#168c16", -0.9], ["60:16.66", "#c8c8c8", 0], ["120:13.65", "#3a48bd", -0.6],
  ["250:11.46", "#6cb2ea", -0.8], ["90:14.60", "#b01212", 0],
];
const sections = ["股吧", "盘口", "资讯", "公告", "研报", "财务", "资料"];

export default function App() {
  return (
    <Screen>
      <GlobalStyle />
      <StatusBar>
        <T $s={42} $c="#e6e6e6" $w={500} $ls={-0.3}>22:45</T>
        <PayBadge>支</PayBadge>
        <Speed>
          <span>39.7</span>
          <span>KB/s</span>
        </Speed>
        <Signal viewBox="0 0 72 40">
          <text x="4" y="19.500" fontSize="22.500" fontWeight="700" fill="#e6e6e6" fontFamily={FONT}>5G</text>
          <g fill="#e6e6e6">
            <path d="M21 35v-4l7-4v8zM32 35V23l6-3v15zM42 35V18l7-4v21zM52 35V13l7-4v26zM62 35V7l7-4v32z" />
            <path d="M5 24h2.500v12L1 31h4zM11 36V24l6.500 5h-4v7z" />
          </g>
        </Signal>
        <BatteryIcon viewBox="0 0 78 36">
          <rect x="2" y="3.500" width="65" height="30" rx="9" fill="none" stroke="#e6e6e6" strokeWidth="3" />
          <rect x="7" y="8.500" width="54" height="20.500" rx="4" fill="#444" />
          <rect x="71" y="14" width="4" height="11" rx="2" fill="#e6e6e6" />
          <text x="34" y="28" fontSize="26" fontWeight="500" textAnchor="middle" fill="#e6e6e6" fontFamily={FONT}>99</text>
        </BatteryIcon>
      </StatusBar>

      <Header>
        <HeaderSide>
          <svg width="34" height="58" viewBox="0 0 34 58" fill="none" stroke="#c4c4c4" strokeWidth="5">
            <path d="M30 3 5 29l25 26" />
          </svg>
          <AppLogo>
            东方
            <br />
            财富
          </AppLogo>
        </HeaderSide>
        <HeaderTitle>
          <T $s={48} $c="#168c16">易明医药</T>
          <CodeRow>
            <T $s={38} $c={GREY}>002826</T>
            <LevelTag>L2</LevelTag>
            <Tri $w={22} $h={15} $c="#3c3c3e" />
          </CodeRow>
        </HeaderTitle>
        <HeaderSide $end>
          <Robot />
          <svg width="58" height="58" viewBox="0 0 58 58" fill="none" stroke="#e2e2e2" strokeWidth="4" strokeLinecap="round" strokeLinejoin="round">
            <path d="M21.500 2.500H4a2 2 0 0 0-2 2V54a2 2 0 0 0 2 2h50a2 2 0 0 0 2-2V37M37 2.500h19V22M55 3 27 31" />
          </svg>
          <svg width="62" height="60" viewBox="0 0 62 60" fill="none" stroke="#e2e2e2" strokeWidth="4.500" strokeLinecap="round">
            <circle cx="29" cy="28" r="26" />
            <path d="M48 47l12 11.500" />
          </svg>
        </HeaderSide>
      </Header>

      <Quote>
        <PriceCol>
          <Pair><T $s={88} $c="#ee0000" $w={600} $ls={-5.6}>22.99</T></Pair>
          <Pair><T $s={43} $c={RED}>10.00%</T><T $s={43} $c={RED}>2.09</T></Pair>
          <Pair><Label>总值<Dots /></Label><T $s={43}>43.84亿</T></Pair>
        </PriceCol>
        <QuoteCol>
          <Pair><Label>今开</Label><T $s={43} $c={RED} $ls={-1.2}>21.31</T></Pair>
          <Pair><Label>换手<Dots /></Label><T $s={43}>23.90%</T></Pair>
          <Pair><Label>流值</Label><T $s={43} $ls={0.5}>40.08亿</T></Pair>
        </QuoteCol>
        <QuoteCol>
          <Pair><Label>最高</Label><T $s={43} $c={RED} $ls={-0.6}>22.99</T></Pair>
          <Pair><Label>总手</Label><T $s={43} $ls={-0.7}>41.67万</T></Pair>
          <Pair><Label>市盈<Sup>动</Sup><Dots /></Label><T $s={43}>58.31</T></Pair>
        </QuoteCol>
        <QuoteCol>
          <Pair><Label>最低</Label><T $s={43} $c={RED} $ls={-1.4}>21.10</T></Pair>
          <Pair><Label>金额</Label><T $s={43} $ls={-1.2}>9.49亿</T></Pair>
          <MoreButton>更多</MoreButton>
        </QuoteCol>
      </Quote>

      <Notice>
        <svg width="54" height="44" viewBox="0 0 54 44" fill="none" stroke="#d9671f" strokeWidth="3">
          <path d="M2.500 12.500 10 11 25 2v40L10 33l-7.500-1.500zM32 12a12 12 0 0 1 0 20M31 3a20 20 0 0 1 0 38" />
        </svg>
        <NoticeText>龙虎榜：买入总额1.822亿元，卖出总额1.531亿元，上...</NoticeText>
        <RedDot />
        <Cross s={30} c="#a0a0a0" />
      </Notice>

      <Tabs>
        <Tab>分时</Tab>
        <Tab>五日</Tab>
        <Tab $on>日K</Tab>
        <Tab>周K</Tab>
        <Tab>月K</Tab>
        <Tab>更多<Tri $hang $w={16} $h={12} $c="#9a9a9a" /></Tab>
        <GearCell>
          <svg width="54" height="54" viewBox="0 0 54 54" fill="none" stroke={GREY} strokeWidth="3.600" strokeLinejoin="round">
            <path d="M23 3h8l2 7 6 3 7-3 5 7-4.500 6v8l4.500 6-5 7-7-3-6 3-2 7h-8l-2-7-6-3-7 3-5-7 4.500-6v-8L3 17l5-7 7 3 6-3z" />
            <circle cx="27" cy="27" r="8.500" />
          </svg>
        </GearCell>
      </Tabs>

      <Charts>
        <AverageBar>
          <Chip $w={109} $gap={5}>均线<Tri $w={15} $h={12} $c="#777" /></Chip>
          <AverageGrid>
            {averageReadings.map(([t, c, ls]) => (
              <Reading key={t} $c={c} $ls={ls}>{t}<Arrow /></Reading>
            ))}
          </AverageGrid>
          <ChipGap $w={50} />
          <Chip $w={127}>DK点<Corner /></Chip>
          <ChipGap $w={39} />
          <Chip $w={133}>前复权</Chip>
        </AverageBar>

        <ChartBox>
          <PriceChart />
          <Controls>
            <Round>
              <svg width="32" height="34" viewBox="0 0 32 34" fill="none" stroke={BLUE} strokeWidth="3">
                <path d="M18 2 3 17l15 15M29 2 14 17l15 15" />
              </svg>
            </Round>
            <Round>
              <svg width="34" height="34" stroke={BLUE} strokeWidth="3.500"><path d="M0 17h34" /></svg>
            </Round>
            <Round>
              <svg width="34" height="34" stroke={BLUE} strokeWidth="3"><path d="M0 17h34M17 0v34" /></svg>
            </Round>
            <Round>
              <svg width="22" height="34" viewBox="0 0 22 34" fill="none" stroke={BLUE} strokeWidth="3"><path d="M17 2 2 17l15 15" /></svg>
            </Round>
            <Round $grey>
              <svg width="22" height="34" viewBox="0 0 22 34" fill="none" stroke="#8c8c8c" strokeWidth="3"><path d="M5 2l15 15L5 32" /></svg>
            </Round>
            <Round>
              <svg width="36" height="36" viewBox="0 0 36 36" fill="none" stroke={BLUE} strokeWidth="3">
                <path d="M3 17V3h14M4 4l12 12M33 19v14H19M32 32 20 20" />
              </svg>
            </Round>
          </Controls>
        </ChartBox>

        <IndicatorBar $h={62}>
          <Chip $w={152} $gap={14}>成交量<Tri $w={15} $h={12} $c="#777" /></Chip>
          <Slot $w={166}><Reading $c="#fff" $s={39} $ls={-1.4}>41.67万<Arrow h={35} /></Reading></Slot>
          <Slot $w={257}><Reading $c="#fbe92b" $s={39} $ls={-1.7}>MA1:32.08万<Arrow h={35} /></Reading></Slot>
          <Slot $w={262}><Reading $c="#d91ad9" $s={39} $ls={-1.7}>MA2:20.63万<Arrow h={35} /></Reading></Slot>
          <Slot $w={257}><Reading $c="#168c16" $s={39} $ls={-2}>MA3:17.30万<Arrow h={35} /></Reading></Slot>
          <Collapse>
            <svg width="18" height="30" viewBox="0 0 18 30" fill="none" stroke="#fff" strokeWidth="4.500" strokeLinecap="round">
              <path d="M15 3 3 15l12 12" />
            </svg>
          </Collapse>
        </IndicatorBar>
        <VolumeChart />

        <IndicatorBar $h={62}>
          <Chip $w={150} $gap={15}>MACD<Tri $w={15} $h={12} $c="#777" /></Chip>
          <Slot $w={204}><Reading $c="#fff" $s={40} $ls={0.5}>DIF:0.50<Arrow h={35} /></Reading></Slot>
          <Slot $w={217}><Reading $c="#fbe92b" $s={40} $ls={0.5}>DEA:0.23<Arrow h={35} /></Reading></Slot>
          <Slot $w={200}><Reading $c="#d91ad9" $s={40} $ls={0.4}>M:0.55<Arrow h={35} /></Reading></Slot>
        </IndicatorBar>
        <MacdChart />
        <DateAxis />

        <BannerWrap>
          <Banner>
            <svg width="48" height="40" viewBox="0 0 48 40" fill={BLUE}>
              <path d="M1 13h4v14H1zM9 12 38 3V0h9v39h-9v-4l-9-2-4 4-9-3v-4l-7-3z" />
            </svg>
            <BannerText>国产创新药迎“DeepSeek时刻”，布局创新药机会来了<Faded>?</Faded></BannerText>
            <BannerRule />
            <Cross s={34} c={BLUE} w={2.6} />
          </Banner>
        </BannerWrap>
      </Charts>

      <Tabs $pad={37}>
        {sections.map((s, i) => (
          <Tab key={s} $on={i === 0}>{s}</Tab>
        ))}
      </Tabs>
      <Cards>
        <Card><CardDot /></Card>
        <Card><CardDot /></Card>
      </Cards>

      <BottomBar>
        <IndexCell>
          <Tri $w={20} $h={8} $c="#8e8e93" $up />
          <T $s={42} $c="#14cc14" $ls={-0.5}>3593.66</T>
          <IndexRow>
            <T $s={35} $c={GREY}>上证</T>
            <T $s={39} $c="#14cc14" $ls={-0.6}>−0.33%</T>
          </IndexRow>
        </IndexCell>
        <NavItem>
          <svg width="68" height="66" viewBox="0 0 68 66" fill="none" stroke={GREY} strokeWidth="3">
            <path d="M18.500 10A27.500 27.500 0 0 1 59.500 46M52.500 54A27.500 27.500 0 0 1 11 20" />
            <path d="M1.500 22.500 11.500 19l-4 10M66 42l-8.500 4.500L60 38" />
            <path d="M24 20l10 10 10-10M34 30v19M23.500 31h21M23.500 40h21" />
          </svg>
          交易
        </NavItem>
        <NavItem>
          <svg width="68" height="66" viewBox="0 0 68 66" fill="none" stroke={GREY} strokeWidth="3">
            <path d="M44 6.500H16a8 8 0 0 0-8 8V51a8 8 0 0 0 8 8h36a8 8 0 0 0 8-8V22" />
            <path d="M25 41l3-9 22-22 5 5-22 22zM52 8.500l3-3q3-1 5 2 1 2-1 4l-2 2z" fill={GREY} stroke="none" />
          </svg>
          发帖
        </NavItem>
        <NavItem>
          <svg width="68" height="66" viewBox="0 0 68 66" fill="none" stroke={GREY} strokeWidth="3">
            <rect x="9" y="7" width="22" height="22" rx="4" />
            <rect x="9" y="35" width="22" height="23" rx="4" />
            <rect x="36" y="35" width="22" height="23" rx="4" />
            <path d="M47.500 6 60 19 47.500 32 35 19z" strokeLinejoin="round" />
          </svg>
          功能
        </NavItem>
        <NavItem>
          <svg width="68" height="66" viewBox="0 0 68 66" fill="none" stroke={GREY} strokeWidth="3">
            <circle cx="34" cy="33" r="26.500" />
            <g fill={GREY} stroke="none">
              <circle cx="22" cy="33" r="3" />
              <circle cx="34" cy="33" r="3" />
              <circle cx="46" cy="33" r="3" />
            </g>
          </svg>
          设自选
        </NavItem>
      </BottomBar>
    </Screen>
  );
}
